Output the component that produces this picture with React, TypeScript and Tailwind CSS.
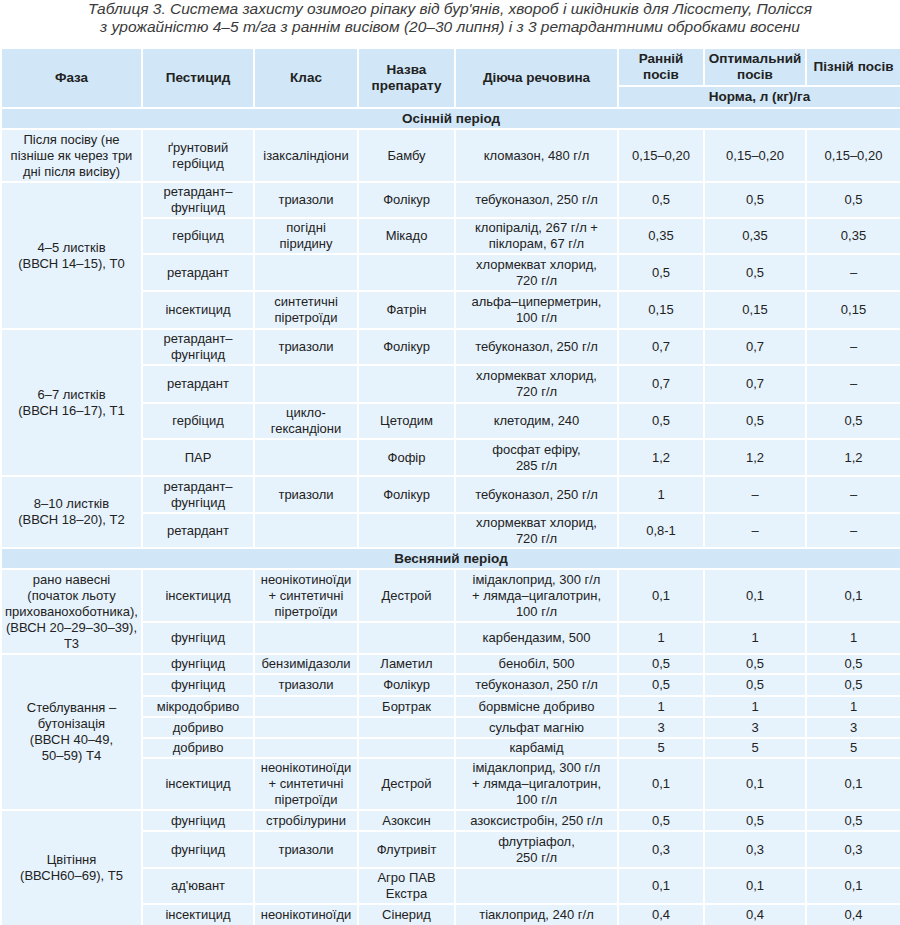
type Row = { h: number; cells: string[] };
type Group = { phase: string; rows: Row[] };
type Section = { title: string; groups: Group[] };

const sections: Section[] = [
  {
    title: "Осінній період",
    groups: [
      {
        phase: "Після посіву (не\nпізніше як через три\nдні після висіву)",
        rows: [
          { h: 53, cells: ["ґрунтовий\nгербіцид", "ізаксаліндіони", "Бамбу", "кломазон, 480 г/л", "0,15–0,20", "0,15–0,20", "0,15–0,20"] },
        ],
      },
      {
        phase: "4–5 листків\n(ВВСН 14–15), Т0",
        rows: [
          { h: 36, cells: ["ретардант–\nфунгіцид", "триазоли", "Фолікур", "тебуконазол, 250 г/л", "0,5", "0,5", "0,5"] },
          { h: 36, cells: ["гербіцид", "погідні\nпіридину", "Мікадо", "клопіралід, 267 г/л +\nпіклорам, 67 г/л", "0,35", "0,35", "0,35"] },
          { h: 37, cells: ["ретардант", "", "", "хлормекват хлорид,\n720 г/л", "0,5", "0,5", "–"] },
          { h: 38, cells: ["інсектицид", "синтетичні\nпіретроїди", "Фатрін", "альфа–циперметрин,\n100 г/л", "0,15", "0,15", "0,15"] },
        ],
      },
      {
        phase: "6–7 листків\n(ВВСН 16–17), Т1",
        rows: [
          { h: 36, cells: ["ретардант–\nфунгіцид", "триазоли", "Фолікур", "тебуконазол, 250 г/л", "0,7", "0,7", "–"] },
          { h: 38, cells: ["ретардант", "", "", "хлормекват хлорид,\n720 г/л", "0,7", "0,7", "–"] },
          { h: 36, cells: ["гербіцид", "цикло-\nгександіони", "Цетодим", "клетодим, 240", "0,5", "0,5", "0,5"] },
          { h: 37, cells: ["ПАР", "", "Фофір", "фосфат ефіру,\n285 г/л", "1,2", "1,2", "1,2"] },
        ],
      },
      {
        phase: "8–10 листків\n(ВВСН 18–20), Т2",
        rows: [
          { h: 37, cells: ["ретардант–\nфунгіцид", "триазоли", "Фолікур", "тебуконазол, 250 г/л", "1", "–", "–"] },
          { h: 35, cells: ["ретардант", "", "", "хлормекват хлорид,\n720 г/л", "0,8-1", "–", "–"] },
        ],
      },
    ],
  },
  {
    title: "Весняний період",
    groups: [
      {
        phase: "рано навесні\n(початок льоту\nприхованохоботника),\n(ВВСН 20–29–30–39),\nТ3",
        rows: [
          { h: 53, cells: ["інсектицид", "неонікотиноїди\n+ синтетичні\nпіретроїди", "Дестрой", "імідаклоприд, 300 г/л\n+ лямда–цигалотрин,\n100 г/л", "0,1", "0,1", "0,1"] },
          { h: 32, cells: ["фунгіцид", "", "", "карбендазим, 500", "1", "1", "1"] },
        ],
      },
      {
        phase: "Стеблування –\nбутонізація\n(ВВСН 40–49,\n50–59) Т4",
        rows: [
          { h: 20, cells: ["фунгіцид", "бензимідазоли", "Ламетил", "бенобіл, 500", "0,5", "0,5", "0,5"] },
          { h: 22, cells: ["фунгіцид", "триазоли", "Фолікур", "тебуконазол, 250 г/л", "0,5", "0,5", "0,5"] },
          { h: 21, cells: ["мікродобриво", "", "Бортрак", "борвмісне добриво", "1", "1", "1"] },
          { h: 21, cells: ["добриво", "", "", "сульфат магнію", "3", "3", "3"] },
          { h: 20, cells: ["добриво", "", "", "карбамід", "5", "5", "5"] },
          { h: 52, cells: ["інсектицид", "неонікотиноїди\n+ синтетичні\nпіретроїди", "Дестрой", "імідаклоприд, 300 г/л\n+ лямда–цигалотрин,\n100 г/л", "0,1", "0,1", "0,1"] },
        ],
      },
      {
        phase: "Цвітіння\n(ВВСН60–69), Т5",
        rows: [
          { h: 21, cells: ["фунгіцид", "стробілурини", "Азоксин", "азоксистробін, 250 г/л", "0,5", "0,5", "0,5"] },
          { h: 37, cells: ["фунгіцид", "триазоли", "Флутривіт", "флутріафол,\n250 г/л", "0,3", "0,3", "0,3"] },
          { h: 36, cells: ["ад'ювант", "", "Агро ПАВ\nЕкстра", "", "0,1", "0,1", "0,1"] },
          { h: 22, cells: ["інсектицид", "неонікотиноїди", "Сінерид", "тіаклоприд, 240 г/л", "0,4", "0,4", "0,4"] },
        ],
      },
    ],
  },
];

const td = "border-2 border-white px-0 py-0 text-center align-middle whitespace-pre-line";
const th = "border-2 border-white px-0 py-0 text-center align-middle font-bold whitespace-pre-line text-[13.5px] leading-[16px]";

export default function App() {
  return (
    <div className="w-[900px] bg-white text-[#222]" style={{ fontFamily: '"Liberation Sans", Arial, sans-serif' }}>
      {/* Title */}
      <div className="h-[47px] text-center italic text-[15.5px] leading-[18px] text-[#3a3a3a]">
        <div>Таблиця 3. Система захисту озимого ріпаку від бур'янів, хвороб і шкідників для Лісостепу, Полісся</div>
        <div>з урожайністю 4–5 т/га з раннім висівом (20–30 липня) і з 3 ретардантними обробками восени</div>
      </div>

      <table className="w-[900px] table-fixed border-collapse text-[13px] leading-[16px]">
        <colgroup>
          <col className="w-[141px]" />
          <col className="w-[112px]" />
          <col className="w-[104px]" />
          <col className="w-[97px]" />
          <col className="w-[163px]" />
          <col className="w-[86px]" />
          <col className="w-[102px]" />
          <col className="w-[95px]" />
        </colgroup>
        <thead className="bg-[#d1e7f7]">
          <tr className="h-[38px]">
            <th rowSpan={2} className={th}>Фаза</th>
            <th rowSpan={2} className={th}>Пестицид</th>
            <th rowSpan={2} className={th}>Клас</th>
            <th rowSpan={2} className={th}>{"Назва\nпрепарату"}</th>
            <th rowSpan={2} className={th}>Діюча речовина</th>
            <th className={th}>{"Ранній\nпосів"}</th>
            <th className={th}>{"Оптимальний\nпосів"}</th>
            <th className={th}>Пізній посів</th>
          </tr>
          <tr className="h-[22px]">
            <th colSpan={3} className={th}>Норма, л (кг)/га</th>
          </tr>
        </thead>
        <tbody className="bg-[#e7f3fc]">
          {sections.map((s) => (
            <SectionRows key={s.title} section={s} />
          ))}
        </tbody>
      </table>
    </div>
  );
}

function SectionRows({ section }: { section: Section }) {
  return (
    <>
      <tr className="h-[21px] bg-[#d1e7f7]">
        <td colSpan={8} className={td + " font-bold text-[13.5px]"}>{section.title}</td>
      </tr>
      {section.groups.map((g) =>
        g.rows.map((r, i) => (
          <tr key={g.phase + i} style={{ height: r.h }}>
            {i === 0 && (
              <td rowSpan={g.rows.length} className={td}>{g.phase}</td>
            )}
            {r.cells.map((c, j) => (
              <td key={j} className={td}>{c}</td>
            ))}
          </tr>
        ))
      )}
    </>
  );
}
